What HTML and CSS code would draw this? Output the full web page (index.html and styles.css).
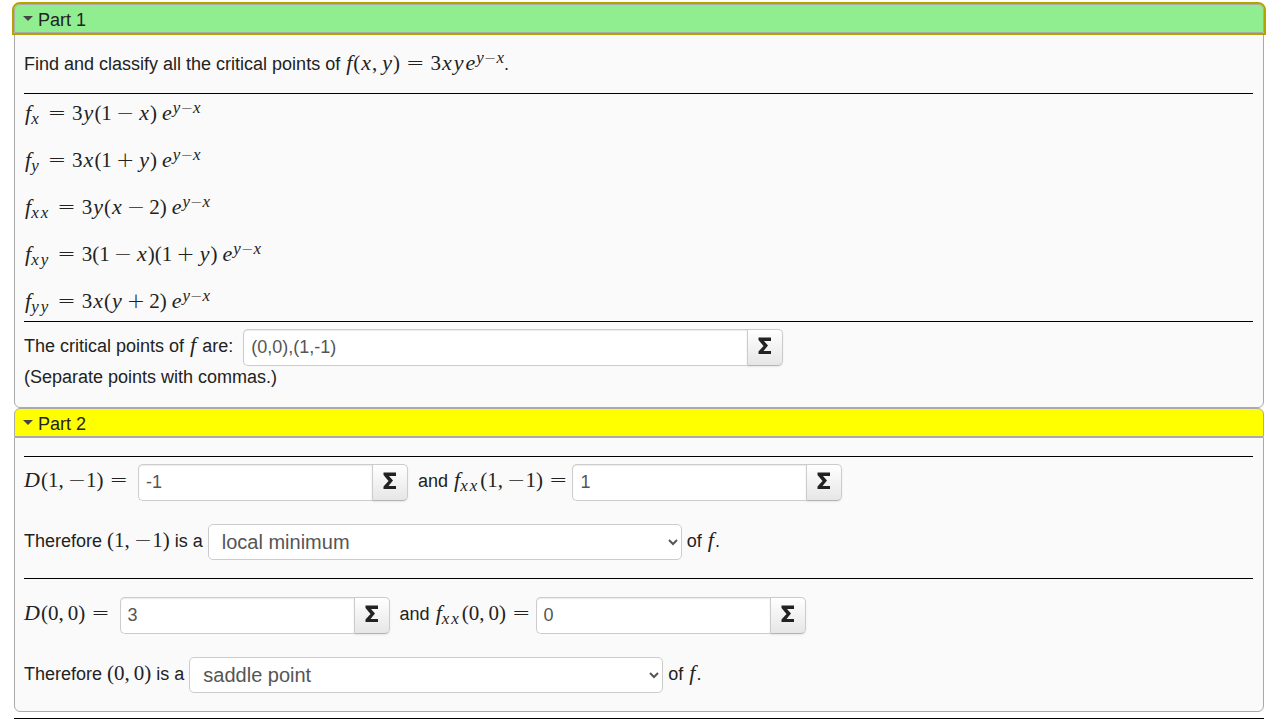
FILE: index.html
```html
<!DOCTYPE html>
<html lang="en">
<head>
<meta charset="utf-8">
<meta name="viewport" content="width=device-width, initial-scale=1">
<title>Critical points</title>
<link rel="stylesheet" href="styles.css">
</head>
<body>
<main class="question">
  <section class="part">
    <h3 class="part-title"><button type="button" class="part-toggle focused part-done" aria-expanded="true"><span class="caret"></span>Part 1</button></h3>
    <div class="part-body">
      <p class="intro">Find and classify all the critical points of <span class="math"><i class="f">f</i>(<i>x</i>,<span class="thin"></span><i>y</i>)<span class="op">=</span>3<i>x</i><i>y</i><i>e</i><sup><i>y</i><span class="sop">−</span><i>x</i></sup></span>.</p>
      <hr>
      <div class="formulas">
        <div class="math"><i class="f">f</i><sub><i>x</i></sub><span class="op">=</span>3<i>y</i>(1<span class="op bin">−</span><i>x</i>)<span class="thin"></span><i>e</i><sup><i>y</i><span class="sop">−</span><i>x</i></sup></div>
        <div class="math"><i class="f">f</i><sub><i>y</i></sub><span class="op">=</span>3<i>x</i>(1<span class="op bin">+</span><i>y</i>)<span class="thin"></span><i>e</i><sup><i>y</i><span class="sop">−</span><i>x</i></sup></div>
        <div class="math"><i class="f">f</i><sub><i>x</i><i>x</i></sub><span class="op">=</span>3<i>y</i>(<i>x</i><span class="op bin">−</span>2)<span class="thin"></span><i>e</i><sup><i>y</i><span class="sop">−</span><i>x</i></sup></div>
        <div class="math"><i class="f">f</i><sub><i>x</i><i>y</i></sub><span class="op">=</span>3(1<span class="op bin">−</span><i>x</i>)(1<span class="op bin">+</span><i>y</i>)<span class="thin"></span><i>e</i><sup><i>y</i><span class="sop">−</span><i>x</i></sup></div>
        <div class="math"><i class="f">f</i><sub><i>y</i><i>y</i></sub><span class="op">=</span>3<i>x</i>(<i>y</i><span class="op bin">+</span>2)<span class="thin"></span><i>e</i><sup><i>y</i><span class="sop">−</span><i>x</i></sup></div>
      </div>
      <hr>
      <div class="line after-rule">
        <label for="points">The critical points of <span class="math"><i class="f">f</i></span> are:</label>
        <span class="field wide spaced"><input id="points" type="text" value="(0,0),(1,-1)"><button type="button" aria-label="Equation editor"><svg viewBox="0 0 14 18" width="14" height="18"><path d="M0.500 0.500H13V4H6L10 8.500L5.500 14H13V17H0.500V14.500L5.500 9L0.500 3Z"/></svg></button></span>
      </div>
      <p class="note">(Separate points with commas.)</p>
    </div>
  </section>
  <section class="part">
    <h3 class="part-title"><button type="button" class="part-toggle part-open" aria-expanded="true"><span class="caret"></span>Part 2</button></h3>
    <div class="part-body">
      <hr>
      <div class="line after-rule">
        <label for="d1"><span class="math"><i class="cap">D</i>(1,<span class="thin"></span><span class="neg">−</span>1)<span class="op last">=</span></span></label>
        <span class="field spaced"><input id="d1" type="text" value="-1"><button type="button" aria-label="Equation editor"><svg viewBox="0 0 14 18" width="14" height="18"><path d="M0.500 0.500H13V4H6L10 8.500L5.500 14H13V17H0.500V14.500L5.500 9L0.500 3Z"/></svg></button></span>
        <label for="f1" class="joined">and <span class="math"><i class="f">f</i><sub><i>x</i><i>x</i></sub>(1,<span class="thin"></span><span class="neg">−</span>1)<span class="op last">=</span></span></label>
        <span class="field"><input id="f1" type="text" value="1"><button type="button" aria-label="Equation editor"><svg viewBox="0 0 14 18" width="14" height="18"><path d="M0.500 0.500H13V4H6L10 8.500L5.500 14H13V17H0.500V14.500L5.500 9L0.500 3Z"/></svg></button></span>
      </div>
      <div class="line verdict">
        <label for="c1">Therefore <span class="math">(1,<span class="thin"></span><span class="neg">−</span>1)</span> is a</label>
        <select id="c1"><option selected>local minimum</option><option>local maximum</option><option>saddle point</option></select>
        <span class="tail">of <span class="math"><i class="f">f</i></span>.</span>
      </div>
      <hr>
      <div class="line second">
        <label for="d2"><span class="math"><i class="cap">D</i>(0,<span class="thin"></span>0)<span class="op last">=</span></span></label>
        <span class="field spaced"><input id="d2" type="text" value="3"><button type="button" aria-label="Equation editor"><svg viewBox="0 0 14 18" width="14" height="18"><path d="M0.500 0.500H13V4H6L10 8.500L5.500 14H13V17H0.500V14.500L5.500 9L0.500 3Z"/></svg></button></span>
        <label for="f2" class="joined">and <span class="math"><i class="f">f</i><sub><i>x</i><i>x</i></sub>(0,<span class="thin"></span>0)<span class="op last">=</span></span></label>
        <span class="field"><input id="f2" type="text" value="0"><button type="button" aria-label="Equation editor"><svg viewBox="0 0 14 18" width="14" height="18"><path d="M0.500 0.500H13V4H6L10 8.500L5.500 14H13V17H0.500V14.500L5.500 9L0.500 3Z"/></svg></button></span>
      </div>
      <div class="line verdict">
        <label for="c2">Therefore <span class="math">(0,<span class="thin"></span>0)</span> is a</label>
        <select id="c2"><option>local minimum</option><option>local maximum</option><option selected>saddle point</option></select>
        <span class="tail">of <span class="math"><i class="f">f</i></span>.</span>
      </div>
    </div>
  </section>
  <hr class="end">
</main>
</body>
</html>
```
FILE: styles.css
```css
* { box-sizing: border-box; }
body {
  margin: 0;
  background: #fff;
  color: #222;
  font: 18px/30px "Liberation Sans", Arial, sans-serif;
}
.question { padding: 4px 14px 0; }
h3, p { margin: 0; }
hr { margin: 0; border: 0; border-top: 1px solid #000; }

.part-title { font-size: 18px; font-weight: 400; display: flex; }
.part-toggle {
  display: flex;
  align-items: center;
  flex: 1;
  height: 29px;
  padding: 2px 8px 0;
  border: 1px solid #aaa;
  border-radius: 6px 6px 0 0;
  color: #222;
  font: inherit;
  text-align: left;
}
.part-done { background: #90ee90; }
.part-open { background: #ff0; }
.focused { outline: 2px solid #b3a400; z-index: 1; }
.caret {
  border: 5px solid transparent;
  border-top-color: #454545;
  border-bottom: 0;
  margin: 0 5px 3px 0;
}
.part-body {
  padding: 18px 10px 18px 9px;
  border: 1px solid #aaa;
  border-radius: 0 0 6px 6px;
  background: #fafafa;
}
.intro { margin: -4px 0 14px; }
.note { line-height: 23px; }
.formulas { display: grid; gap: 9px; line-height: 37px; padding-bottom: 1px; }
.formulas > div { height: 38px; }

.math { font-family: "Liberation Serif", "Times New Roman", serif; font-size: 21px; }
.math i { font-size: 22px; margin: 0 1px; }
.math .f { margin: 0 1px; }
.math .cap { margin: 0 1px 0 0; }
.math sup, .math sub { font-size: 14px; line-height: 0; vertical-align: 7px; }
.math sub { vertical-align: -4px; margin: 0 2px 0 -2px; }
.math sup i { font-size: 17px; margin: 0; }
.math sub i { font-size: 17px; margin: 0 1px; }
.op, .neg, .sop { font-family: "DejaVu Sans", sans-serif; font-weight: 200; font-size: 22px; line-height: 0; }
.op { margin: 0 6px; }
.op.bin { margin: 0 4px; }
.op.last { margin-right: 0; }
.sop { font-size: 15px; }
.thin { margin-left: 4px; }

.line { display: flex; align-items: center; gap: 5px; }
.line label, .tail { padding-bottom: 4px; }
.after-rule { padding-top: 7px; }
.second { padding-top: 18px; }
.verdict { padding: 23px 0 18px; }
.verdict:last-child { padding-bottom: 0; }
.joined { margin-left: 5px; }
.spaced { margin-left: 5px; }
.field { display: flex; width: 270px; height: 37px; }
.field.wide { width: 540px; }
.field input {
  flex: 1;
  min-width: 0;
  padding: 0 7px;
  border: 1px solid #ccc;
  border-right: 0;
  border-radius: 5px 0 0 5px;
  background: #fff;
  box-shadow: inset 0 1px 1px rgba(0, 0, 0, .08);
  color: #555;
  font: 18px "Liberation Sans", Arial, sans-serif;
}
.field button {
  display: flex;
  align-items: center;
  justify-content: center;
  width: 36px;
  padding: 0 0 3px;
  border: 1px solid #ccc;
  border-bottom-color: #b3b3b3;
  border-radius: 0 5px 5px 0;
  background: linear-gradient(#fff, #e6e6e6);
  box-shadow: 0 1px 2px rgba(0, 0, 0, .08);
}
.field svg { fill: #222; }
select {
  width: 474px;
  height: 36px;
  padding: 0 6px 0 9px;
  border: 1px solid #ccc;
  border-radius: 5px;
  background: #fff;
  color: #555;
  font: 20px "Liberation Sans", Arial, sans-serif;
}
.end { margin-top: 6px; }
```
